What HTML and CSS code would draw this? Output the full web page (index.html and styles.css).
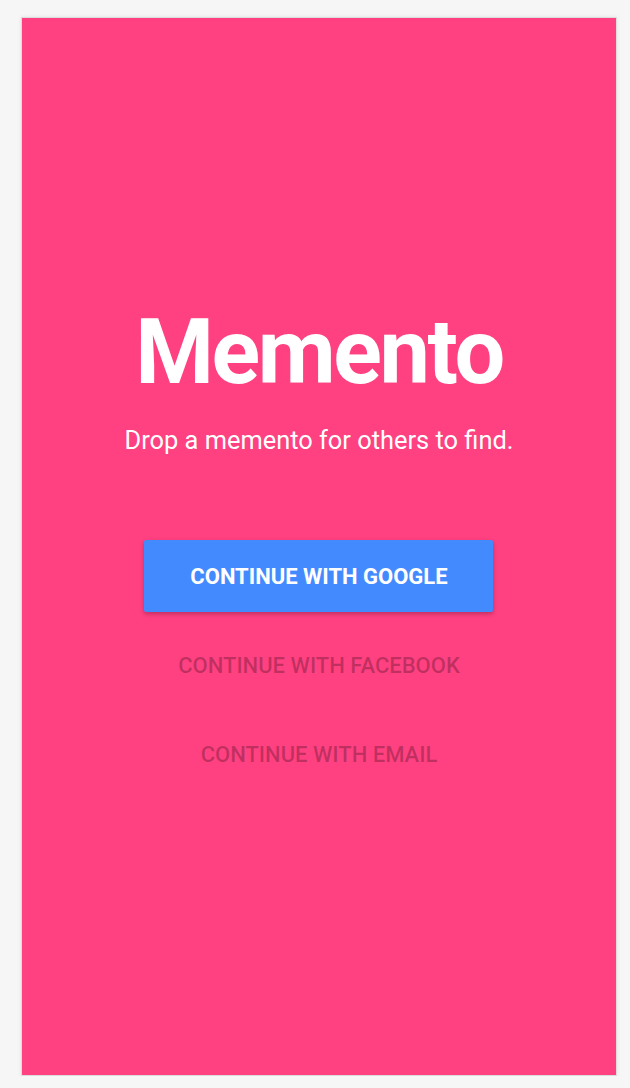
FILE: index.html
```html
<!DOCTYPE html>
<html>
<head>
<meta charset="utf-8">
<link rel="stylesheet" href="styles.css">
</head>
<body>
<div class="screen">
  <div class="content">
    <h1 class="title">Memento</h1>
    <p class="tagline">Drop a memento for others to find.</p>
    <div class="actions">
      <button class="btn btn-google">CONTINUE WITH GOOGLE</button>
      <button class="btn btn-flat">CONTINUE WITH FACEBOOK</button>
      <button class="btn btn-flat">CONTINUE WITH EMAIL</button>
    </div>
  </div>
</div>
</body>
</html>
```
FILE: styles.css
```css
html, body {
  margin: 0;
  padding: 0;
}
body {
  background: #f6f6f6;
  padding: 17px 0 0 21px;
  font-family: Roboto, "Liberation Sans", sans-serif;
}
.screen {
  box-sizing: border-box;
  width: 596px;
  height: 1059px;
  background: #ff4081;
  border: 1px solid #dcdcdc;
  box-shadow: 0 0 4px rgba(0,0,0,0.08);
  display: flex;
  flex-direction: column;
  align-items: center;
}
.content {
  margin-top: 282px;
  display: flex;
  flex-direction: column;
  align-items: center;
}
.title {
  margin: 0;
  font-size: 90px;
  font-weight: 700;
  color: #fff;
  line-height: 106px;
  letter-spacing: -2.4px;
}
.tagline {
  margin: 19px 0 0;
  color: #fff;
  font-size: 25.4px;
  line-height: 30px;
}
.actions {
  margin-top: 85px;
  display: flex;
  flex-direction: column;
  align-items: center;
  gap: 17px;
}
.btn {
  width: 349px;
  height: 72px;
  border: none;
  border-radius: 2px;
  font-family: Roboto, "Liberation Sans", sans-serif;
  font-size: 22px;
  background: transparent;
  padding: 0;
}
.btn-google {
  background: #448aff;
  color: #fff;
  font-weight: 700;
  box-shadow: 0 2px 4px rgba(0,0,0,0.25);
}
.btn-flat {
  color: rgba(0,0,0,0.26);
  font-weight: 500;
}
```
